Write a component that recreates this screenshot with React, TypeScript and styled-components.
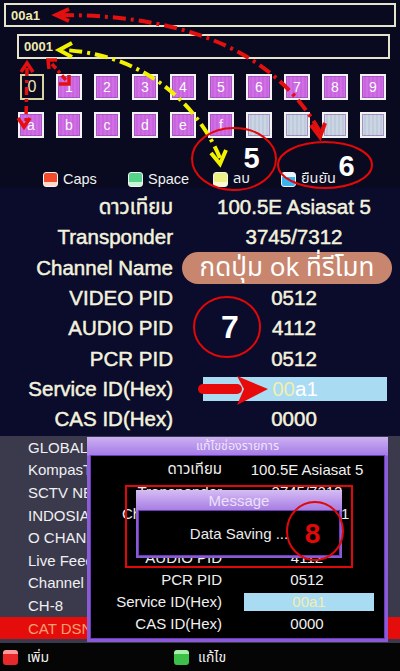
import React from "react";
import styled, { createGlobalStyle } from "styled-components";

const GlobalStyle = createGlobalStyle`
  html, body { margin: 0; padding: 0; background: #000; }
  body { font-family: "Liberation Sans", "Noto Sans Thai", "Noto Sans", "DejaVu Sans", sans-serif; }
  * { box-sizing: border-box; }
`;

const Page = styled.div`
  position: relative;
  width: 400px;
  height: 671px;
  overflow: hidden;
  display: flex;
  flex-direction: column;
  background: #000;
`;

/* ---------- keyboard panel ---------- */
const KeyboardPanel = styled.section`
  height: 188px;
  flex: none;
  background: #090920;
  display: flex;
  flex-direction: column;
  padding-top: 3px;
`;

const InputBox = styled.div<{ $left: number; $right: number; $top: number; $h: number }>`
  margin: ${(p) => p.$top}px ${(p) => p.$right}px 0 ${(p) => p.$left}px;
  height: ${(p) => p.$h}px;
  border: 2px solid #e4e4cc;
  display: flex;
  align-items: center;
  padding-left: 5px;
  color: #eeeab0;
  font-weight: bold;
  font-size: 13px;
`;

const KeyGrid = styled.div`
  margin-top: 15px;
  padding-left: 18px;
  display: grid;
  grid-template-columns: repeat(10, 26px);
  grid-auto-rows: 26px;
  column-gap: 12px;
  row-gap: 12px;
`;

type KeyKind = "pink" | "blank" | "active";

const Key = styled.div<{ $kind: KeyKind }>`
  display: flex;
  align-items: center;
  justify-content: center;
  font-size: 14px;
  color: ${(p) => (p.$kind === "active" ? "#ece8bc" : "#fafafa")};
  border: 2px solid ${(p) => (p.$kind === "active" ? "#d8d4a4" : "#f2f2f2")};
  background: ${(p) =>
    p.$kind === "pink"
      ? "repeating-linear-gradient(90deg, #d06ee6 0 2px, #c865de 2px 4px)"
      : p.$kind === "blank"
      ? "repeating-linear-gradient(90deg, #cbd6e4 0 2px, #bfcbdb 2px 4px)"
      : "transparent"};
  box-shadow: ${(p) => (p.$kind === "active" ? "none" : "inset 0 0 0 1px rgba(120,60,150,0.45)")};
  ${(p) => (p.$kind === "active" ? "width: 24px; margin-left: 2px; font-size: 16px;" : "")}
`;

const Legend = styled.div`
  margin-top: 30px;
  padding-left: 43px;
  display: grid;
  grid-template-columns: 85px 85px 68px auto;
  height: 15px;
`;

const LegendItem = styled.div`
  display: flex;
  align-items: center;
  gap: 5px;
  color: #f0f0f0;
  font-size: 14.5px;
  white-space: nowrap;
`;

const Swatch = styled.span<{ $color: string; $light: string; $topLight?: boolean }>`
  display: inline-block;
  width: 15px;
  height: 15px;
  border-radius: 3px;
  border: 1px solid #f4f4f4;
  background: ${(p) =>
    p.$topLight
      ? `linear-gradient(${p.$light} 0 30%, ${p.$color} 30%)`
      : `linear-gradient(${p.$color} 0 68%, ${p.$light} 68%)`};
`;

/* ---------- detail panel ---------- */
const DetailPanel = styled.section`
  height: 248px;
  flex: none;
  background: #0b0b2b;
  padding-top: 4px;
  display: grid;
  grid-template-columns: 173px 212px;
  column-gap: 15px;
  grid-auto-rows: 30.3px;
  align-items: center;
`;

const DetailLabel = styled.div`
  text-align: right;
  white-space: nowrap;
  color: #f2f2de;
  font-size: 20.5px;
  -webkit-text-stroke: 0.5px #f2f2de;
`;

const DetailValue = styled.div`
  text-align: center;
  white-space: nowrap;
  color: #f2f2de;
  font-size: 20.5px;
  -webkit-text-stroke: 0.5px #f2f2de;
`;

const HintPill = styled.div`
  margin-left: -6px;
  width: 210px;
  height: 32px;
  border-radius: 16px;
  background: #c8866e;
  color: #fff;
  font-size: 26px;
  line-height: 1;
  display: flex;
  align-items: center;
  justify-content: center;
  white-space: nowrap;
  font-family: "Noto Sans Thai", "Noto Sans", "Liberation Sans", sans-serif;
`;

const ServiceBox = styled.div<{ $left: number; $w: number; $h: number; $size: number }>`
  margin-left: ${(p) => p.$left}px;
  width: ${(p) => p.$w}px;
  height: ${(p) => p.$h}px;
  background: #a9dbf2;
  display: flex;
  align-items: center;
  justify-content: center;
  font-size: ${(p) => p.$size}px;
  color: #fff;
`;

const PaleDigits = styled.span`
  color: #f2eeb0;
`;

/* ---------- channel panel ---------- */
const ChannelPanel = styled.section`
  position: relative;
  flex: 1;
  background: #3b3a4d;
  display: flex;
  flex-direction: column;
`;

const ChannelItem = styled.div<{ $selected?: boolean }>`
  height: 22.6px;
  flex: none;
  padding-left: 28px;
  display: flex;
  align-items: center;
  font-size: 15px;
  white-space: nowrap;
  color: ${(p) => (p.$selected ? "#f8a070" : "#f0f0f2")};
  background: ${(p) => (p.$selected ? "#e50c0c" : "transparent")};
`;

const Dialog = styled.div`
  position: absolute;
  left: 87px;
  top: 1px;
  width: 301px;
  height: 205px;
  background: linear-gradient(180deg, #cdb0f2 0px, #a47ce6 18px, #8c5ed8 19px, #8a5ad6 100%);
  padding: 0 3px 3px 3px;
  display: flex;
  flex-direction: column;
`;

const DialogTitle = styled.div`
  height: 18px;
  flex: none;
  display: flex;
  align-items: center;
  justify-content: center;
  color: #efe4fb;
  font-size: 12.5px;
`;

const DialogBody = styled.div`
  flex: 1;
  background: #000;
  border: 1px solid #6a3cb8;
  padding-top: 2px;
  display: grid;
  grid-template-columns: 131px 150px;
  column-gap: 10px;
  grid-auto-rows: 22.1px;
  align-items: center;
`;

const DialogLabel = styled.div`
  text-align: right;
  white-space: nowrap;
  color: #f0f0f0;
  font-size: 15px;
`;

const DialogValue = styled.div`
  text-align: center;
  white-space: nowrap;
  color: #f0f0f0;
  font-size: 15px;
`;

const Message = styled.div`
  position: absolute;
  left: 49px;
  top: 53px;
  width: 206px;
  height: 68px;
  background: linear-gradient(180deg, #d6bcf4 0px, #a77ee4 20px, #8c5cd6 22px, #8a5ad6 100%);
  padding: 0 2px 2px 2px;
  display: flex;
  flex-direction: column;
`;

const MessageTitle = styled.div`
  height: 20px;
  flex: none;
  display: flex;
  align-items: center;
  justify-content: center;
  color: #ece0fa;
  font-size: 15px;
`;

const MessageBody = styled.div`
  flex: 1;
  background: #000;
  border: 1px solid #6a3cb8;
  display: flex;
  align-items: center;
  justify-content: center;
  color: #ececec;
  font-size: 15px;
`;

/* ---------- footer ---------- */
const Footer = styled.footer`
  height: 28px;
  flex: none;
  background: #050505;
  display: flex;
  align-items: center;
  padding-left: 3px;
`;

const FooterItem = styled.div<{ $w?: number }>`
  width: ${(p) => (p.$w ? `${p.$w}px` : "auto")};
  display: flex;
  align-items: center;
  gap: 9px;
  color: #f0f0f0;
  font-size: 14px;
`;

const FooterSwatch = styled.span<{ $color: string; $light: string }>`
  width: 15px;
  height: 15px;
  border-radius: 3px;
  background: linear-gradient(${(p) => p.$light} 0 25%, ${(p) => p.$color} 25%);
`;

/* ---------- annotations ---------- */
const Annotations = styled.svg`
  position: absolute;
  left: 0;
  top: 0;
  pointer-events: none;
`;

const keysRow1 = ["0", "1", "2", "3", "4", "5", "6", "7", "8", "9"];
const keysRow2 = ["a", "b", "c", "d", "e", "f", "", "", "", ""];

const details: [string, string][] = [
  ["ดาวเทียม", "100.5E Asiasat 5"],
  ["Transponder", "3745/7312"],
  ["Channel Name", ""],
  ["VIDEO PID", "0512"],
  ["AUDIO PID", "4112"],
  ["PCR PID", "0512"],
  ["Service ID(Hex)", ""],
  ["CAS ID(Hex)", "0000"],
];

const channels = [
  "GLOBAL TV",
  "KompasTV",
  "SCTV NEWS",
  "INDOSIAR",
  "O CHANNEL",
  "Live Feed",
  "Channel 9",
  "CH-8",
  "CAT DSNG1",
];

const dialogRows: [string, string][] = [
  ["ดาวเทียม", "100.5E Asiasat 5"],
  ["Transponder", "3745/7312"],
  ["Channel Name", "CAT DSNG1"],
  ["VIDEO PID", "0512"],
  ["AUDIO PID", "4112"],
  ["PCR PID", "0512"],
  ["Service ID(Hex)", ""],
  ["CAS ID(Hex)", "0000"],
];

const DASH = "13 5 3 5";

export default function App() {
  return (
    <>
      <GlobalStyle />
      <Page>
        <KeyboardPanel>
          <InputBox $left={4} $right={4} $top={0} $h={24}>00a1</InputBox>
          <InputBox $left={17} $right={10} $top={7} $h={25}>0001</InputBox>
          <KeyGrid>
            {keysRow1.map((k, i) => (
              <Key key={"r1" + k} $kind={i === 0 ? "active" : "pink"}>{k}</Key>
            ))}
            {keysRow2.map((k, i) => (
              <Key key={"r2" + i} $kind={k ? "pink" : "blank"}>{k}</Key>
            ))}
          </KeyGrid>
          <Legend>
            <LegendItem><Swatch $color="#f24a2a" $light="#ffd8cc" />Caps</LegendItem>
            <LegendItem><Swatch $color="#56d48a" $light="#c8f4d8" />Space</LegendItem>
            <LegendItem><Swatch $color="#eef084" $light="#fafad0" />ลบ</LegendItem>
            <LegendItem><Swatch $color="#3ab4f0" $light="#e8f6ff" $topLight />ยืนยัน</LegendItem>
          </Legend>
        </KeyboardPanel>

        <DetailPanel>
          {details.map(([label, value]) => (
            <React.Fragment key={label}>
              <DetailLabel>{label}</DetailLabel>
              {label === "Channel Name" ? (
                <HintPill>กดปุ่ม ok ที่รีโมท</HintPill>
              ) : label === "Service ID(Hex)" ? (
                <ServiceBox $left={15} $w={184} $h={24} $size={20.5}>
                  <PaleDigits>00</PaleDigits>a1
                </ServiceBox>
              ) : (
                <DetailValue>{value}</DetailValue>
              )}
            </React.Fragment>
          ))}
        </DetailPanel>

        <ChannelPanel>
          {channels.map((c, i) => (
            <ChannelItem key={c} $selected={i === channels.length - 1}>{c}</ChannelItem>
          ))}
          <Dialog>
            <DialogTitle>แก้ไขช่องรายการ</DialogTitle>
            <DialogBody>
              {dialogRows.map(([label, value]) => (
                <React.Fragment key={label}>
                  <DialogLabel>{label}</DialogLabel>
                  {label === "Service ID(Hex)" ? (
                    <ServiceBox $left={12} $w={130} $h={18} $size={15}>
                      <PaleDigits>00a1</PaleDigits>
                    </ServiceBox>
                  ) : (
                    <DialogValue>{value}</DialogValue>
                  )}
                </React.Fragment>
              ))}
            </DialogBody>
            <Message>
              <MessageTitle>Message</MessageTitle>
              <MessageBody>Data Saving ...</MessageBody>
            </Message>
          </Dialog>
        </ChannelPanel>

        <Footer>
          <FooterItem $w={171}>
            <FooterSwatch $color="#e8282a" $light="#ff9a9a" />
            เพิ่ม
          </FooterItem>
          <FooterItem>
            <FooterSwatch $color="#3cc04a" $light="#a8f0a8" />
            แก้ไข
          </FooterItem>
        </Footer>

        <Annotations width={400} height={671} viewBox="0 0 400 671">
          {/* red curved arrow (6) */}
          <path d="M320,132 C280,60 200,15 60,15" fill="none" stroke="#e41010" strokeWidth={4} strokeDasharray={DASH} />
          <path d="M69,9 L56,15 L69,21" fill="none" stroke="#e41010" strokeWidth={4} strokeLinejoin="miter" />
          <path d="M311,125 L320,137 L325,123" fill="none" stroke="#e41010" strokeWidth={4} />
          {/* yellow curved arrow (5) */}
          <path d="M220,158 C200,110 150,55 64,50" fill="none" stroke="#f2f200" strokeWidth={4} strokeDasharray={DASH} />
          <path d="M72,43 L59,50 L72,57" fill="none" stroke="#f2f200" strokeWidth={4} />
          <path d="M211,153 L220,164 L226,150" fill="none" stroke="#f2f200" strokeWidth={4} />
          {/* small red arrows near key 0 */}
          <path d="M27,68 L26,122" fill="none" stroke="#e41010" strokeWidth={3.5} strokeDasharray="8 4 3 4" />
          <path d="M21,72 L27,63 L33,72" fill="none" stroke="#e41010" strokeWidth={3.5} />
          <path d="M18,118 L24,127 L30,118" fill="none" stroke="#e41010" strokeWidth={3.5} />
          <path d="M52,64 L66,80" fill="none" stroke="#e41010" strokeWidth={3.5} strokeDasharray="6 3 3 3" />
          <path d="M49,69 L48,60 L57,60" fill="none" stroke="#e41010" strokeWidth={3.5} />
          <path d="M59,84 L69,84 L69,75" fill="none" stroke="#e41010" strokeWidth={3.5} />
          {/* ellipses */}
          <ellipse cx={234} cy={159} rx={42} ry={31} fill="none" stroke="#e00808" strokeWidth={2} />
          <ellipse cx={325} cy={165} rx={47} ry={23} fill="none" stroke="#e00808" strokeWidth={2} />
          <ellipse cx={227} cy={327} rx={33} ry={30} fill="none" stroke="#e00808" strokeWidth={2} />
          <ellipse cx={315} cy={531} rx={28} ry={29} fill="none" stroke="#e00808" strokeWidth={2} />
          <rect x={126} y={486} width={226} height={81} fill="none" stroke="#e00808" strokeWidth={2} />
          {/* thick red arrow */}
          <rect x={198} y={384} width={44} height={10} rx={5} fill="#e80a0a" />
          <path d="M237,376 L268,389 L237,405 L244,389 Z" fill="#e80a0a" />
          {/* numbers */}
          <text x={251.5} y={168} textAnchor="middle" fill="#fff" fontFamily="'Liberation Sans Narrow', 'Liberation Sans', sans-serif" fontWeight="bold" fontSize={29}>5</text>
          <text x={346.5} y={176} textAnchor="middle" fill="#fff" fontFamily="'Liberation Sans Narrow', 'Liberation Sans', sans-serif" fontWeight="bold" fontSize={29}>6</text>
          <text x={230} y={338} textAnchor="middle" fill="#fff" fontFamily="'Liberation Sans Narrow', 'Liberation Sans', sans-serif" fontWeight="bold" fontSize={32}>7</text>
          <text x={312.5} y={543} textAnchor="middle" fill="#e00808" fontFamily="'Liberation Sans', sans-serif" fontWeight="bold" fontSize={28}>8</text>
        </Annotations>
      </Page>
    </>
  );
}
